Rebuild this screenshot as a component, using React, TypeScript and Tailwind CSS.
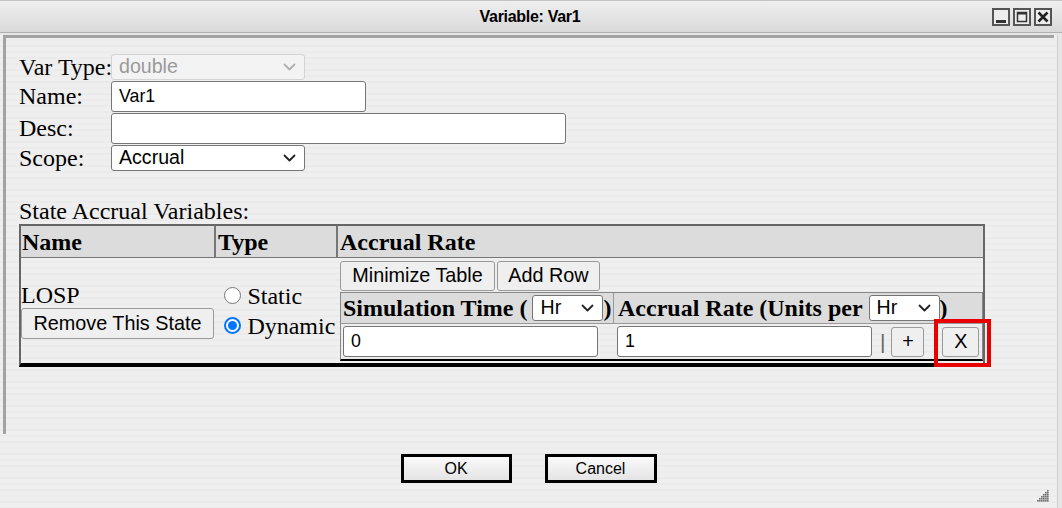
import React from "react";

const serif = "font-['Liberation_Serif','Times_New_Roman',serif]";
const sans = "font-['Liberation_Sans',Arial,sans-serif]";

const Chevron = ({ color = "#222" }: { color?: string }) => (
  <svg width="13" height="8" viewBox="0 0 13 8" fill="none">
    <path
      d="M1.5 1.5l5 5 5-5"
      stroke={color}
      strokeWidth="1.8"
      strokeLinecap="round"
      strokeLinejoin="round"
    />
  </svg>
);

const Select = ({
  value,
  className,
  disabled,
}: {
  value: string;
  className: string;
  disabled?: boolean;
}) => (
  <div
    className={`flex h-[26px] items-center justify-between rounded-[3px] border pl-[7px] pr-[8px] text-[19.6px] ${sans} ${
      disabled
        ? "border-[#d4d4d4] bg-[#f3f3f3] text-[#9a9a9a]"
        : "border-[#767676] bg-white text-black"
    } ${className}`}
  >
    <span className="leading-none">{value}</span>
    <Chevron color={disabled ? "#b0b0b0" : "#222"} />
  </div>
);

const Btn = ({
  children,
  className,
}: {
  children: React.ReactNode;
  className: string;
}) => (
  <button
    className={`flex items-center justify-center rounded-[3px] border border-[#9a9a9a] bg-[#efefef] text-[19.8px] text-black ${sans} ${className}`}
  >
    {children}
  </button>
);

const Radio = ({ checked }: { checked?: boolean }) =>
  checked ? (
    <span className="flex h-[17px] w-[17px] items-center justify-center rounded-full border-2 border-[#0075ff] bg-white">
      <span className="h-[9px] w-[9px] rounded-full bg-[#0075ff]" />
    </span>
  ) : (
    <span className="h-[17px] w-[17px] rounded-full border border-[#767676] bg-white" />
  );

const WinButton = ({ kind }: { kind: "min" | "max" | "close" }) => (
  <svg width="18" height="18" viewBox="0 0 18 18">
    <rect x="1" y="1" width="16" height="16" fill="#ececec" stroke="#555" strokeWidth="2" />
    {kind === "min" && <rect x="4" y="12" width="10" height="3" fill="#333" />}
    {kind === "max" && (
      <>
        <rect x="4.5" y="4.5" width="9" height="9" fill="none" stroke="#333" strokeWidth="1.5" />
        <rect x="4" y="4" width="10" height="2.5" fill="#333" />
      </>
    )}
    {kind === "close" && (
      <path d="M4.5 4.5l9 9M13.5 4.5l-9 9" stroke="#222" strokeWidth="2.6" />
    )}
  </svg>
);

const Grip = () => (
  <svg width="13" height="13" viewBox="0 0 13 13" fill="#6e6e6e">
    {[
      [11, 1], [9, 3], [11, 3], [7, 5], [9, 5], [11, 5], [5, 7], [7, 7], [9, 7], [11, 7],
      [3, 9], [5, 9], [7, 9], [9, 9], [11, 9], [1, 11], [3, 11], [5, 11], [7, 11], [9, 11], [11, 11],
    ].map(([x, y], i) => (
      <rect key={i} x={x} y={y} width="1.6" height="1.6" />
    ))}
  </svg>
);

const labelCls = "w-[92px] shrink-0 whitespace-nowrap leading-none";

export default function App() {
  return (
    <div className={`h-[508px] w-[1062px] overflow-hidden bg-[#e6e6e6] ${serif}`}>
      {/* title bar */}
      <div className="flex h-[33px] items-center border-t border-b border-t-[#c4c4c4] border-b-[#b0b0b0] bg-[linear-gradient(180deg,#efefef,#d9d9d9)]">
        <div className={`flex-1 pl-[68px] text-center text-[16px] font-bold tracking-[-0.3px] text-black ${sans}`}>
          Variable: Var1
        </div>
        <div className="mr-[10px] flex gap-[3px]">
          <WinButton kind="min" />
          <WinButton kind="max" />
          <WinButton kind="close" />
        </div>
      </div>

      {/* body */}
      <div className="relative h-[474px] w-[1058px] border-r border-b border-r-[#cfcfcf] border-b-[#c8c8c8] bg-[repeating-linear-gradient(180deg,#efefef_0px,#efefef_4px,#ebebeb_4px,#ebebeb_6px)]">
        <div className="ml-[3px] mr-[3px] mt-[2px] h-[399px] border-t-[3px] border-l-[3px] border-[#a3a3a3] pl-[13px] pt-[16px] text-[24px] text-black">
          {/* form rows */}
          <div className="flex h-[26px] items-center">
            <span className={labelCls}>Var Type:</span>
            <Select value="double" disabled className="w-[194px]" />
          </div>
          <div className="flex h-[32px] items-center">
            <span className={labelCls}>Name:</span>
            <input
              defaultValue="Var1"
              className={`h-[31px] w-[255px] rounded-[3px] border border-[#767676] bg-white px-[7px] text-[17.8px] outline-none ${sans}`}
            />
          </div>
          <div className="flex h-[32px] items-center">
            <span className={labelCls}>Desc:</span>
            <input
              className={`h-[31px] w-[455px] rounded-[3px] border border-[#767676] bg-white px-[7px] text-[17.8px] outline-none ${sans}`}
            />
          </div>
          <div className="flex h-[27px] items-center">
            <span className={labelCls}>Scope:</span>
            <Select value="Accrual" className="w-[194px]" />
          </div>

          <div className="mt-[27px] h-[26px] leading-[26px]">State Accrual Variables:</div>

          {/* outer table */}
          <div className="w-[966px] border-2 border-b-[4px] border-[#666] border-b-black">
            <div className="flex h-[32px] border-b border-[#777] bg-[#dcdcdc] font-bold">
              <div className="flex w-[195px] items-center border-r-2 border-[#777] pl-[1px]">Name</div>
              <div className="flex w-[122px] items-center border-r-2 border-[#777] pl-[2px]">Type</div>
              <div className="flex flex-1 items-center pl-[2px]">Accrual Rate</div>
            </div>
            <div className="flex">
              <div className="flex w-[197px] flex-col justify-center">
                <div className="h-[26px] leading-[26px]">LOSP</div>
                <Btn className="h-[31px] w-[193px]">Remove This State</Btn>
              </div>
              <div className="flex w-[122px] flex-col justify-center gap-[6px] pl-[7px]">
                <label className="flex items-center gap-[6px] leading-none">
                  <Radio />
                  Static
                </label>
                <label className="flex items-center gap-[6px] leading-none">
                  <Radio checked />
                  Dynamic
                </label>
              </div>
              <div className="flex-1 pt-[3px] pl-[1px] pb-[2px]">
                <div className="mb-[1px] flex gap-[2px]">
                  <Btn className="h-[30px] w-[155px]">Minimize Table</Btn>
                  <Btn className="h-[30px] w-[103px]">Add Row</Btn>
                </div>
                {/* inner table */}
                <div className="w-[643px] border border-b-2 border-[#888] border-b-black font-bold">
                  <div className="flex h-[31px] border-b border-[#999] bg-[#dcdcdc]">
                    <div className="flex w-[273px] items-center whitespace-nowrap border-r border-[#999] pl-[2px]">
                      Simulation Time (
                      <Select value="Hr" className="ml-[5px] w-[71px] font-normal" />)
                    </div>
                    <div className="flex flex-1 items-center whitespace-nowrap pl-[4px]">
                      Accrual Rate (Units per
                      <Select value="Hr" className="ml-[6px] w-[71px] font-normal" />)
                    </div>
                  </div>
                  <div className="flex h-[35px] items-center font-normal">
                    <div className="flex w-[274px] pl-[2px]">
                      <input
                        defaultValue="0"
                        className={`h-[31px] w-[255px] rounded-[3px] border border-[#767676] bg-white px-[7px] text-[17.8px] outline-none ${sans}`}
                      />
                    </div>
                    <div className="flex items-center pl-[2px]">
                      <input
                        defaultValue="1"
                        className={`h-[31px] w-[255px] rounded-[3px] border border-[#767676] bg-white px-[7px] text-[17.8px] outline-none ${sans}`}
                      />
                      <span className={`ml-[8px] text-[21px] font-light leading-none text-[#666] ${sans}`}>|</span>
                      <Btn className="ml-[6px] h-[30px] w-[33px]">+</Btn>
                      <span className="relative ml-[18px]">
                        <Btn className="h-[30px] w-[37px]">X</Btn>
                        <span className="absolute -top-[8px] -right-[12px] -bottom-[10px] -left-[8px] border-4 border-[#e80000]" />
                      </span>
                    </div>
                  </div>
                </div>
              </div>
            </div>
          </div>
        </div>

        {/* footer */}
        <div className={`flex justify-center gap-[33px] pt-[20px] ${sans}`}>
          <button className="h-[29px] w-[111px] border-[3px] border-black bg-[linear-gradient(180deg,#fafafa,#e4e4e4)] text-[16px] text-black">
            OK
          </button>
          <button className="h-[29px] w-[112px] border-[3px] border-black bg-[linear-gradient(180deg,#fafafa,#e4e4e4)] text-[16px] text-black">
            Cancel
          </button>
        </div>

        <div className="absolute right-[8px] bottom-[6px]">
          <Grip />
        </div>
      </div>
    </div>
  );
}
